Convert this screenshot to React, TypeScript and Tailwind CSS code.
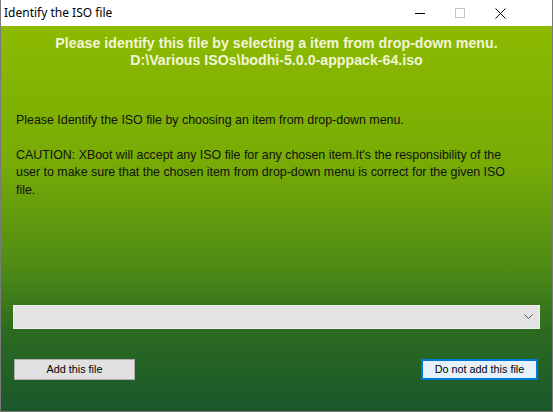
export default function App() {
  return (
    <div className="w-[553px] h-[412px] flex flex-col border border-[#7a7a7a] border-t-0 overflow-hidden bg-white">
      {/* Title bar */}
      <div className="h-[26px] flex items-center bg-white shrink-0">
        <span className="pl-[3px] text-[12px] text-black" style={{ fontFamily: '"Noto Sans", "Open Sans", sans-serif' }}>
          Identify the ISO file
        </span>
        <div className="ml-auto flex h-full pr-[32px]">
          <div className="w-[40px] flex items-center justify-center">
            <div className="w-[10px] h-[1px] bg-black" />
          </div>
          <div className="w-[40px] flex items-center justify-center">
            <div className="w-[10px] h-[10px] border border-[#c6c6c6]" />
          </div>
          <div className="w-[40px] flex items-center justify-center">
            <svg width="11" height="11" viewBox="0 0 11 11">
              <path d="M0.5 0.5 L10.5 10.5 M10.5 0.5 L0.5 10.5" stroke="#000" strokeWidth="1" />
            </svg>
          </div>
        </div>
      </div>

      {/* Body */}
      <div
        className="flex-1 flex flex-col"
        style={{
          fontFamily: '"Liberation Sans", Arial, sans-serif',
          backgroundImage: "linear-gradient(to bottom, #8cba00 0%, #78ac05 35%, #4f8c14 62%, #2a6a20 80%, #1a572c 100%)",
        }}
      >
        <div className="pt-[9px] text-center text-[14.2px] font-bold leading-[17px] text-[#f2f5d8]">
          <div>Please identify this file by selecting a item from drop-down menu.</div>
          <div>D:\Various ISOs\bodhi-5.0.0-apppack-64.iso</div>
        </div>

        <div className="mt-[43px] pl-[15px] w-[508px] text-[12.4px] leading-[17.5px] text-[#111]">
          <p>Please Identify the ISO file by choosing an item from drop-down menu.</p>
          <p className="mt-[17px]">
            CAUTION: XBoot will accept any ISO file for any chosen item.It's the responsibility of the user to make sure that the chosen item from drop-down menu is correct for the given ISO file.
          </p>
        </div>

        <div className="mt-[106px] mx-[12px] h-[24px] bg-[#e3e3e3] border border-[#eeeeee] flex items-center justify-end pr-[6px]">
          <svg width="9" height="6" viewBox="0 0 9 6">
            <path d="M0.5 0.5 L4.5 4.5 L8.5 0.5" stroke="#555" strokeWidth="1" fill="none" />
          </svg>
        </div>

        <div className="mt-[30px] flex justify-between pl-[13px] pr-[14px]">
          <button className="w-[121px] h-[21px] bg-[#e1e1e1] border border-[#adadad] text-[10.8px] text-black">
            Add this file
          </button>
          <button className="w-[117px] h-[21px] bg-[#e5f1fb] border-2 border-[#0078d7] text-[10.8px] text-black">
            Do not add this file
          </button>
        </div>
      </div>
    </div>
  );
}
